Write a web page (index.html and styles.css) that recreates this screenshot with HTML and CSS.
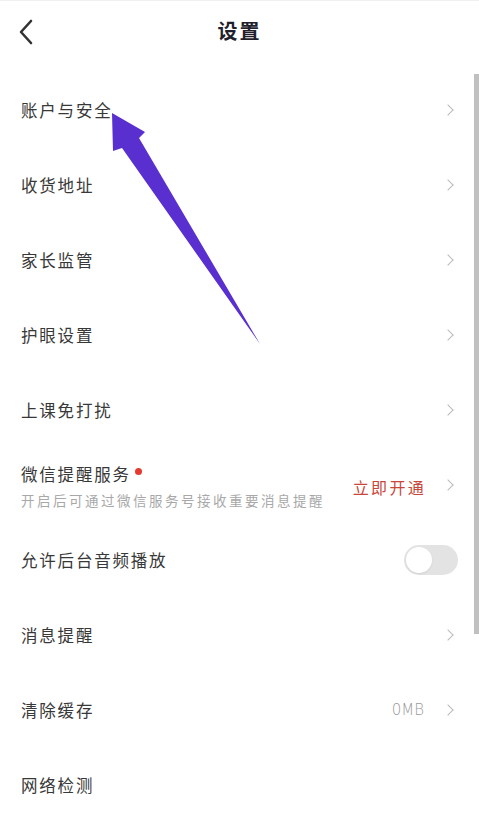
FILE: index.html
```html
<!DOCTYPE html>
<html lang="zh">
<head>
<meta charset="utf-8">
<link rel="stylesheet" href="styles.css">
</head>
<body>
<div class="page">
  <header class="topbar">
    <svg class="back" width="16" height="26" viewBox="0 0 16 26"><path d="M13 2 L3 13 L13 24" fill="none" stroke="#333" stroke-width="2.6" stroke-linecap="round" stroke-linejoin="round"/></svg>
    <h1 class="title">设置</h1>
  </header>
  <ul class="list">
    <li class="row"><span class="label">账户与安全</span><span class="chev"></span></li>
    <li class="row"><span class="label">收货地址</span><span class="chev"></span></li>
    <li class="row"><span class="label">家长监管</span><span class="chev"></span></li>
    <li class="row"><span class="label">护眼设置</span><span class="chev"></span></li>
    <li class="row"><span class="label">上课免打扰</span><span class="chev"></span></li>
    <li class="row">
      <div class="stack">
        <span class="label">微信提醒服务<i class="dot"></i></span>
        <span class="sub">开启后可通过微信服务号接收重要消息提醒</span>
      </div>
      <span class="action">立即开通</span><span class="chev"></span>
    </li>
    <li class="row"><span class="label">允许后台音频播放</span><span class="toggle"><span class="knob"></span></span></li>
    <li class="row"><span class="label">消息提醒</span><span class="chev"></span></li>
    <li class="row"><span class="label">清除缓存</span><span class="value">0MB</span><span class="chev"></span></li>
    <li class="row"><span class="label">网络检测</span></li>
  </ul>
  <div class="scrollbar"></div>
  <svg class="arrow" width="479" height="822" viewBox="0 0 479 822"><path d="M112 112 L145 131 L139 137 L260 343 L122 147 L113 150 Z" fill="#5a2fd0"/></svg>
</div>
</body>
</html>
```
FILE: styles.css
```css
html, body {
  margin: 0;
  padding: 0;
  background: #fff;
}
body {
  font-family: "Noto Sans CJK SC", "Noto Sans", sans-serif;
  color: #333;
}
.page {
  position: relative;
  width: 479px;
  height: 822px;
  overflow: hidden;
  border-top: 1px solid #f0f0f0;
  box-sizing: border-box;
}
.topbar {
  height: 71px;
  display: flex;
  align-items: flex-start;
  justify-content: center;
  position: relative;
}
.back {
  position: absolute;
  left: 18px;
  top: 18px;
}
.title {
  margin: 16px 0 0;
  font-size: 20px;
  font-weight: 700;
  letter-spacing: 2px;
  color: #1f1f2e;
  line-height: 28px;
}
.list {
  list-style: none;
  margin: 0;
  padding: 0;
}
.row {
  height: 75px;
  display: flex;
  align-items: center;
  padding: 0 24px 0 21px;
}
.label {
  flex: 1;
  font-size: 16.5px;
  letter-spacing: 1.8px;
  color: #383838;
  display: flex;
  align-items: center;
}
.stack {
  flex: 1;
  display: flex;
  flex-direction: column;
  gap: 4px;
  margin-top: 2px;
}
.sub {
  font-size: 13.5px;
  letter-spacing: 2.5px;
  color: #a8a8a8;
}
.dot {
  width: 7px;
  height: 7px;
  border-radius: 50%;
  background: #e53a30;
  margin-left: 4px;
  margin-top: -4px;
}
.action {
  font-size: 16px;
  letter-spacing: 2.3px;
  color: #c9463a;
  margin-right: 18px;
  margin-top: 4px;
}
.value {
  font-size: 15px;
  color: #9a9a9a;
  margin-right: 20px;
  font-family: "DejaVu Sans", sans-serif;
  font-weight: 300;
}
.chev {
  width: 7px;
  height: 7px;
  border-top: 1.3px solid #bbb;
  border-right: 1.3px solid #bbb;
  transform: rotate(45deg);
  margin-right: 3px;
}
.toggle {
  width: 54px;
  height: 30px;
  border-radius: 15px;
  background: #e3e3e3;
  display: flex;
  align-items: center;
  padding: 2px;
  box-sizing: border-box;
  margin-right: -3px;
}
.knob {
  width: 26px;
  height: 26px;
  border-radius: 50%;
  background: #fff;
  box-shadow: 0 1px 2px rgba(0,0,0,0.08);
}
.scrollbar {
  position: absolute;
  right: 0;
  top: 73px;
  width: 5px;
  height: 560px;
  background: #c0c0c0;
}
.arrow {
  position: absolute;
  left: 0;
  top: 0;
  pointer-events: none;
}
```
